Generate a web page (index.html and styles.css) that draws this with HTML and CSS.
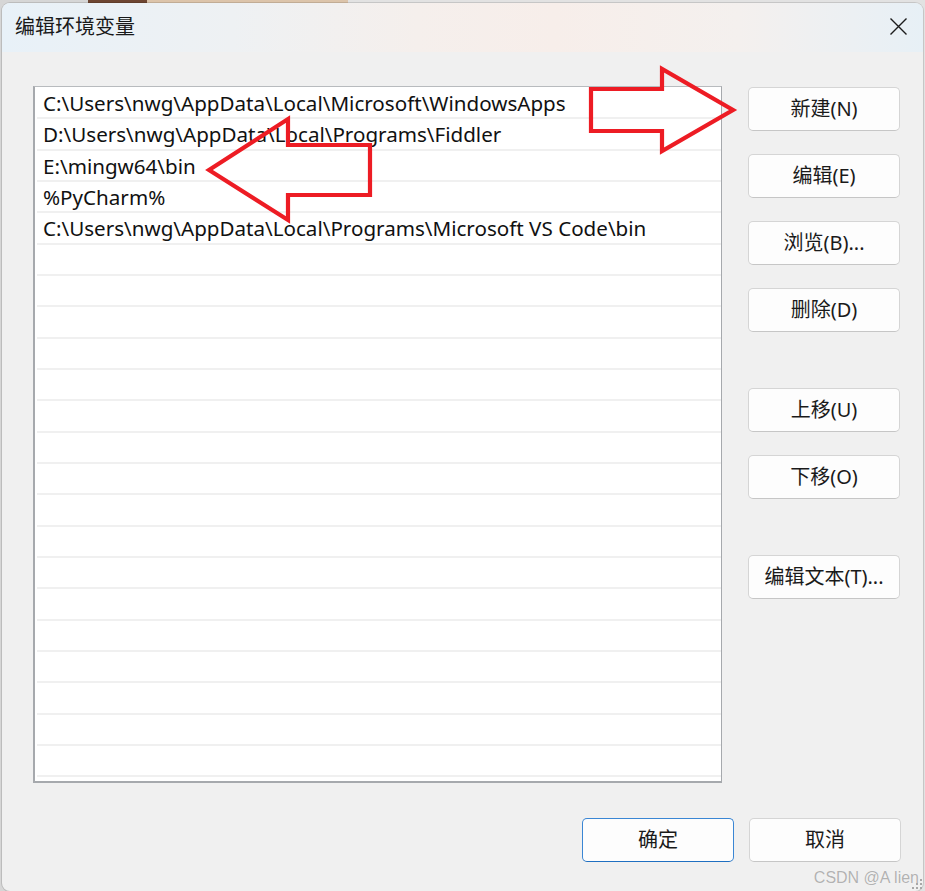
FILE: index.html
```html
<!DOCTYPE html>
<html lang="zh-CN">
<head>
<meta charset="utf-8">
<title>编辑环境变量</title>
<link rel="stylesheet" href="styles.css">
</head>
<body>
<div class="dialog">
  <div class="titlebar">
    <span class="title">编辑环境变量</span>
    <span class="close" aria-label="关闭">
      <svg width="17" height="17" viewBox="0 0 17 17"><path d="M0.5 0.5 L16.5 16.5 M16.5 0.5 L0.5 16.5" stroke="#1c1c1c" stroke-width="1.4" fill="none"/></svg>
    </span>
  </div>
  <div class="content">
    <div class="main">
      <div class="list">
        <div class="row">C:\Users\nwg\AppData\Local\Microsoft\WindowsApps</div>
        <div class="row">D:\Users\nwg\AppData\Local\Programs\Fiddler</div>
        <div class="row">E:\mingw64\bin</div>
        <div class="row">%PyCharm%</div>
        <div class="row">C:\Users\nwg\AppData\Local\Programs\Microsoft VS Code\bin</div>
        <div class="row"></div><div class="row"></div><div class="row"></div><div class="row"></div>
        <div class="row"></div><div class="row"></div><div class="row"></div><div class="row"></div>
        <div class="row"></div><div class="row"></div><div class="row"></div><div class="row"></div>
        <div class="row"></div><div class="row"></div><div class="row"></div><div class="row"></div>
        <div class="row"></div>
      </div>
      <div class="side">
        <button class="btn">新建(N)</button>
        <button class="btn">编辑(E)</button>
        <button class="btn">浏览(B)...</button>
        <button class="btn">删除(D)</button>
        <button class="btn sep">上移(U)</button>
        <button class="btn">下移(O)</button>
        <button class="btn sep">编辑文本(T)...</button>
      </div>
    </div>
    <div class="footer">
      <button class="btn default">确定</button>
      <button class="btn">取消</button>
    </div>
  </div>
</div>
<svg class="annot" width="925" height="891" viewBox="0 0 925 891">
  <polygon points="591,89 662,89 662,69 733,110 662,151 662,131 591,131" fill="none" stroke="#ed1c24" stroke-width="4.2" stroke-linejoin="miter"/>
  <polygon points="370,145 288,145 288,119 209,170 288,220 288,195 370,195" fill="none" stroke="#ed1c24" stroke-width="4.2" stroke-linejoin="miter"/>
</svg>
<div class="watermark">CSDN @A lien</div>
<div class="grip">
  <svg width="12" height="12" viewBox="0 0 12 12"><g fill="#a8a8a8"><rect x="9" y="1" width="2" height="2"/><rect x="5" y="5" width="2" height="2"/><rect x="9" y="5" width="2" height="2"/><rect x="1" y="9" width="2" height="2"/><rect x="5" y="9" width="2" height="2"/><rect x="9" y="9" width="2" height="2"/></g></svg>
</div>
</body>
</html>
```
FILE: styles.css
```css
html, body {
  margin: 0;
  padding: 0;
}
body {
  width: 925px;
  height: 891px;
  overflow: hidden;
  position: relative;
  background:
    linear-gradient(90deg, #d6d6d6 0 88px, #6e4632 88px 147px, #dcc4aa 147px 348px, #e2e2e2 348px 100%);
  font-family: "Noto Sans", "Noto Sans CJK SC", sans-serif;
  color: #1a1a1a;
}
.dialog {
  margin: 3px 0 0 2px;
  width: 921px;
  height: 888px;
  background: #f0f0f0;
  border-radius: 8px;
  box-shadow: 0 0 0 1px rgba(0,0,0,0.12);
  overflow: hidden;
  display: flex;
  flex-direction: column;
}
.titlebar {
  height: 49px;
  flex: none;
  display: flex;
  align-items: center;
  justify-content: space-between;
  padding: 0 16px 0 13px;
  background: linear-gradient(90deg, #e8f1f8 0%, #eef1f3 25%, #f5efec 45%, #f7eeea 60%, #f4f0ee 80%, #e7f0f6 100%);
}
.title {
  font-family: "Noto Sans CJK SC", sans-serif;
  font-size: 20px;
  line-height: 24px;
  color: #1a1a1a;
  margin-top: -3px;
}
.close {
  display: flex;
  margin-top: -3px;
}
.content {
  flex: 1;
  display: flex;
  flex-direction: column;
  padding: 34px 22px 0 31px;
}
.main {
  display: flex;
  gap: 26px;
}
.list {
  box-sizing: border-box;
  width: 689px;
  height: 697px;
  background: #ffffff;
  border: 1px solid #a6a9ad;
  border-left-width: 2px;
  border-bottom-width: 2px;
  border-top-color: #b8bbbe;
  padding: 1px 0 0 2px;
  overflow: hidden;
  flex: none;
}
.row {
  height: 31.33px;
  box-sizing: border-box;
  border-bottom: 2px solid #f0f0f0;
  padding-left: 6px;
  font-size: 20.6px;
  line-height: 30px;
  white-space: nowrap;
  color: #111;
}
.side {
  width: 152px;
  display: flex;
  flex-direction: column;
  gap: 23px;
  padding-top: 1px;
}
.btn {
  height: 44px;
  width: 152px;
  background: #fdfdfd;
  border: 1px solid #d5d5d5;
  border-bottom-color: #c6c6c6;
  border-radius: 5px;
  font-family: "Noto Sans", "Noto Sans CJK SC", sans-serif;
  font-size: 20px;
  color: #1a1a1a;
  padding: 0;
  line-height: 1;
}
.btn.sep {
  margin-top: 33px;
}
.footer {
  display: flex;
  justify-content: flex-end;
  gap: 15px;
  margin-top: 35px;
}
.btn.default {
  border: 1px solid #3a86d4;
  border-bottom-color: #1f6fc1;
}
.annot {
  position: absolute;
  left: 0;
  top: 0;
  pointer-events: none;
}
.watermark {
  position: absolute;
  right: 6px;
  bottom: 4px;
  font-family: "Liberation Sans", sans-serif;
  font-size: 16px;
  color: #b2b2b2;
  text-shadow: 0 0 1px #fff;
}
.grip {
  position: absolute;
  right: 2px;
  bottom: 1px;
  display: flex;
}
```
